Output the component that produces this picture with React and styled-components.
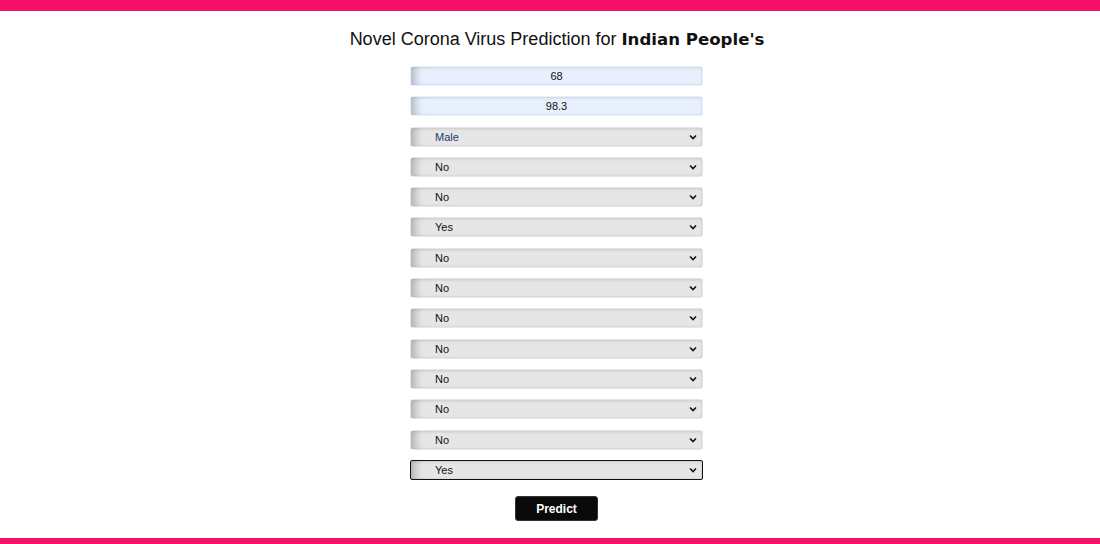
import React, { useState } from "react";
import styled, { createGlobalStyle } from "styled-components";

const GlobalStyle = createGlobalStyle`
  html, body {
    margin: 0;
    padding: 0;
    background: #ffffff;
    font-family: "Liberation Sans", Arial, sans-serif;
    overflow: hidden;
  }
`;

const chevron =
  "data:image/svg+xml;utf8," +
  encodeURIComponent(
    '<svg xmlns="http://www.w3.org/2000/svg" width="8" height="6" viewBox="0 0 8 6"><path d="M1 1.5 L4 4.5 L7 1.5" fill="none" stroke="#111" stroke-width="1.6"/></svg>'
  );

const Page = styled.div`
  height: 544px;
  display: flex;
  flex-direction: column;
  box-sizing: border-box;
  border-top: 11px solid #f70f6c;
`;

const Main = styled.main`
  flex: 1;
  display: flex;
  flex-direction: column;
  align-items: center;
`;

const Title = styled.h1`
  margin: 17px 0 15px 0;
  font-size: 18px;
  line-height: 22px;
  font-weight: normal;
  color: #111;
  padding-left: 14px;

  b {
    font-family: "Arial Black", "DejaVu Sans", sans-serif;
    font-weight: 900;
    font-size: 16.6px;
  }
`;

const Form = styled.form`
  width: 293px;
  margin-left: 13px;
  display: flex;
  flex-direction: column;
  gap: 10.3px;
`;

const fieldLook = `
  width: 100%;
  height: 20px;
  box-sizing: border-box;
  border: 1px solid transparent;
  border-radius: 3px;
  font-family: "Liberation Sans", Arial, sans-serif;
  font-size: 11px;
  color: #111;
  outline: none;
  box-shadow: inset 10px 0 8px -6px rgba(0, 0, 0, 0.24),
    inset 0 2px 3px -1px rgba(0, 0, 0, 0.1),
    inset 0 -1px 2px -1px rgba(0, 0, 0, 0.1),
    inset -1px 0 1px rgba(0, 0, 0, 0.05);
`;

const NumberInput = styled.input`
  ${fieldLook}
  background: #e8f0fe;
  text-align: center;
  padding: 0;
`;

const Select = styled.select`
  ${fieldLook}
  appearance: none;
  -webkit-appearance: none;
  background-color: #e6e6e6;
  background-image: url("${chevron}");
  background-repeat: no-repeat;
  background-position: right 5px center;
  padding: 0 16px 0 24px;
  border-color: ${(p) => (p.$focused ? "#111" : "transparent")};
  border-radius: ${(p) => (p.$focused ? "2px" : "3px")};
  color: ${(p) => (p.$blue ? "#1a3d6e" : "#111")};
`;

const Button = styled.button`
  align-self: center;
  margin-top: 6px;
  width: 83px;
  height: 25px;
  border: 1px solid #333;
  border-radius: 3px;
  background: #0a0a0a;
  color: #fff;
  font-family: "Liberation Sans", Arial, sans-serif;
  font-weight: bold;
  font-size: 12px;
  cursor: pointer;
`;

const Footer = styled.div`
  height: 6px;
  background: #f70f6c;
`;

const selects = [
  { name: "gender", options: ["Male", "Female"], value: "Male" },
  { name: "s1", options: ["No", "Yes"], value: "No" },
  { name: "s2", options: ["No", "Yes"], value: "No" },
  { name: "s3", options: ["Yes", "No"], value: "Yes" },
  { name: "s4", options: ["No", "Yes"], value: "No" },
  { name: "s5", options: ["No", "Yes"], value: "No" },
  { name: "s6", options: ["No", "Yes"], value: "No" },
  { name: "s7", options: ["No", "Yes"], value: "No" },
  { name: "s8", options: ["No", "Yes"], value: "No" },
  { name: "s9", options: ["No", "Yes"], value: "No" },
  { name: "s10", options: ["No", "Yes"], value: "No" },
  { name: "s11", options: ["Yes", "No"], value: "Yes" },
];

export default function App() {
  const [age, setAge] = useState("68");
  const [temp, setTemp] = useState("98.3");

  return (
    <>
      <GlobalStyle />
      <Page>
        <Main>
          <Title>
            Novel Corona Virus Prediction for <b>Indian People's</b>
          </Title>
          <Form onSubmit={(e) => e.preventDefault()}>
            <NumberInput value={age} onChange={(e) => setAge(e.target.value)} />
            <NumberInput value={temp} onChange={(e) => setTemp(e.target.value)} />
            {selects.map((s, i) => (
              <Select
                key={s.name}
                name={s.name}
                defaultValue={s.value}
                $blue={i === 0}
                $focused={i === selects.length - 1}
              >
                {s.options.map((o) => (
                  <option key={o}>{o}</option>
                ))}
              </Select>
            ))}
            <Button type="submit">Predict</Button>
          </Form>
        </Main>
        <Footer />
      </Page>
    </>
  );
}
